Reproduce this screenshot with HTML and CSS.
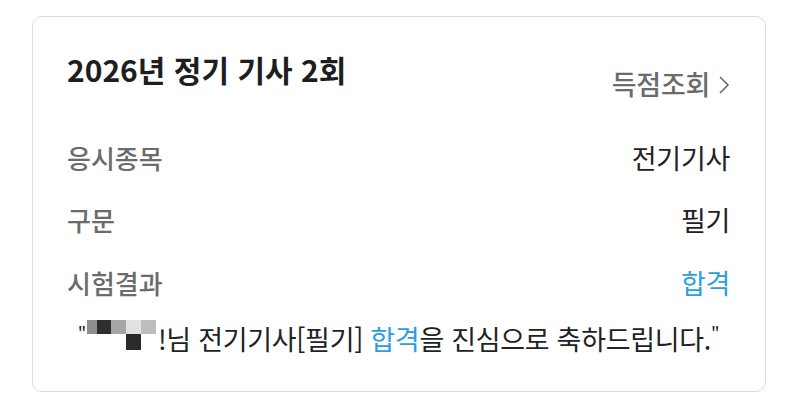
FILE: index.html
```html
<!DOCTYPE html>
<html lang="ko">
<head>
<meta charset="utf-8">
<link rel="stylesheet" href="styles.css">
</head>
<body>
<section class="card">
  <header class="card-head">
    <h1 class="title">2026년 정기 기사 2회</h1>
    <a class="score-link">득점조회<svg class="chev" viewBox="0 0 12 20" width="12" height="20"><path d="M2 2 L10 10 L2 18" fill="none" stroke="#6b6b6b" stroke-width="1.6"/></svg></a>
  </header>
  <dl class="rows">
    <div class="row"><dt>응시종목</dt><dd>전기기사</dd></div>
    <div class="row"><dt>구문</dt><dd>필기</dd></div>
    <div class="row"><dt>시험결과</dt><dd class="pass">합격</dd></div>
  </dl>
  <p class="message"><span class="q">"</span><span class="mosaic"><i class="m1"></i><i class="m2"></i><i class="m3"></i><i class="m4"></i><i class="m5"></i><i class="m6"></i></span>!님 전기기사[필기] <span class="pass">합격</span>을 진심으로 축하드립니다.<span class="q">"</span></p>
</section>
</body>
</html>
```
FILE: styles.css
```css
* { box-sizing: border-box; }
html, body { margin: 0; padding: 0; background: #fff; }
body {
  font-family: "Noto Sans CJK KR", "Noto Sans", sans-serif;
  color: #222;
}
.card {
  margin: 16px 0 0 32px;
  width: 734px;
  height: 376px;
  border: 1.5px solid #dcdcdc;
  border-radius: 10px;
  padding: 32px 35px 0 34px;
}
.card-head {
  display: flex;
  justify-content: space-between;
  align-items: flex-start;
}
.title {
  margin: 0;
  font-size: 30px;
  line-height: 40px;
  font-weight: 700;
  color: #1e1e1e;
  letter-spacing: 0;
}
.score-link {
  display: flex;
  align-items: center;
  gap: 8px;
  margin-top: 17px;
  font-size: 27px;
  line-height: 36px;
  font-weight: 500;
  color: #6b6b6b;
  letter-spacing: -0.3px;
}
.chev { margin-top: 2px; }
.rows { margin: 24px 0 0; }
.row {
  display: flex;
  justify-content: space-between;
  align-items: center;
  height: 62.5px;
}
.row dt {
  font-size: 26px;
  font-weight: 500;
  color: #6b6b6b;
  letter-spacing: 0;
}
.row dd {
  margin: 0;
  font-size: 27px;
  font-weight: 400;
  color: #222;
  letter-spacing: -0.3px;
}
.row dd.pass, .pass { color: #2b9fdc; }
.message {
  margin: 7px 0 0;
  display: flex;
  align-items: center;
  justify-content: center;
  font-size: 27px;
  line-height: 36px;
  color: #222;
  letter-spacing: -0.3px;
  white-space: pre;
}
.q { font-size: 18px; margin-top: -10px; }
.mosaic {
  display: grid;
  grid-template-columns: 10px 14px 15px 15px 15px;
  grid-template-rows: 14px 16px;
  margin: -8px 2px 0 1px;
}
.mosaic i { display: block; }
.m1 { background: #8e8e8e; }
.m2 { background: #2e2e2e; }
.m3 { background: #a6a6a6; }
.m4 { background: #e2e2e2; }
.m5 { background: #bdbdbd; }
.m6 { background: #2a2a2a; grid-column: 4; grid-row: 2; }
```
